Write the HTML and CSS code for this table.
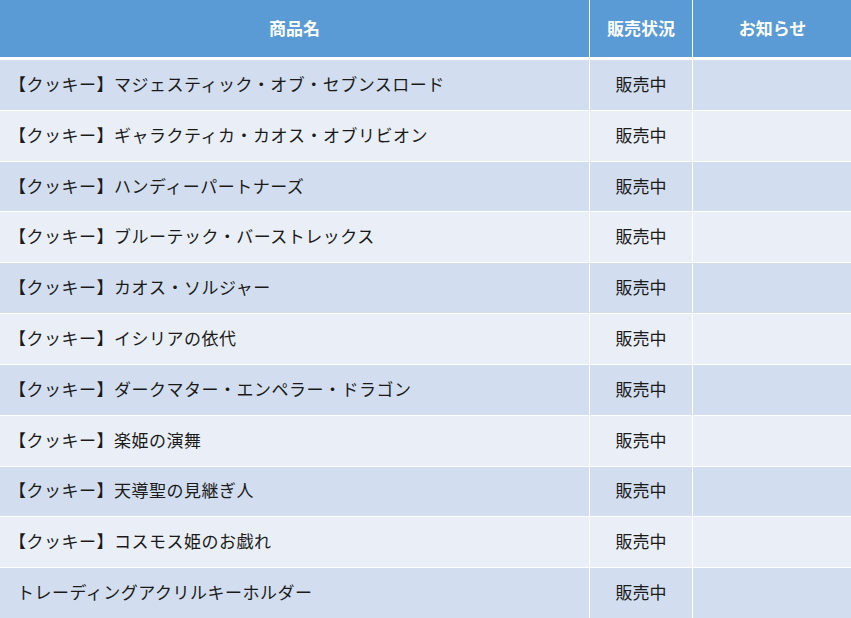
FILE: index.html
```html
<!DOCTYPE html>
<html lang="ja">
<head>
<meta charset="utf-8">
<link rel="stylesheet" href="styles.css">
</head>
<body>
<div class="table">
  <div class="head">
    <div class="th">商品名</div>
    <div class="th">販売状況</div>
    <div class="th">お知らせ</div>
  </div>
  <div class="body">
    <div class="row odd"><div class="td name">【クッキー】マジェスティック・オブ・セブンスロード</div><div class="td status">販売中</div><div class="td"></div></div>
    <div class="row even"><div class="td name">【クッキー】ギャラクティカ・カオス・オブリビオン</div><div class="td status">販売中</div><div class="td"></div></div>
    <div class="row odd"><div class="td name">【クッキー】ハンディーパートナーズ</div><div class="td status">販売中</div><div class="td"></div></div>
    <div class="row even"><div class="td name">【クッキー】ブルーテック・バーストレックス</div><div class="td status">販売中</div><div class="td"></div></div>
    <div class="row odd"><div class="td name">【クッキー】カオス・ソルジャー</div><div class="td status">販売中</div><div class="td"></div></div>
    <div class="row even"><div class="td name">【クッキー】イシリアの依代</div><div class="td status">販売中</div><div class="td"></div></div>
    <div class="row odd"><div class="td name">【クッキー】ダークマター・エンペラー・ドラゴン</div><div class="td status">販売中</div><div class="td"></div></div>
    <div class="row even"><div class="td name">【クッキー】楽姫の演舞</div><div class="td status">販売中</div><div class="td"></div></div>
    <div class="row odd"><div class="td name">【クッキー】天導聖の見継ぎ人</div><div class="td status">販売中</div><div class="td"></div></div>
    <div class="row even"><div class="td name">【クッキー】コスモス姫のお戯れ</div><div class="td status">販売中</div><div class="td"></div></div>
    <div class="row odd"><div class="td name plain">トレーディングアクリルキーホルダー</div><div class="td status">販売中</div><div class="td"></div></div>
  </div>
</div>
</body>
</html>
```
FILE: styles.css
```css
html, body {
  margin: 0;
  padding: 0;
  background: #ffffff;
}
body {
  width: 851px;
  height: 618px;
  overflow: hidden;
  font-family: "Noto Sans CJK JP", "Noto Sans", sans-serif;
}
.table {
  display: flex;
  flex-direction: column;
  width: 851px;
  height: 618px;
}
.head, .row {
  display: grid;
  grid-template-columns: 589px 102px 159px;
  column-gap: 1px;
}
.head {
  height: 57px;
  margin-bottom: 3px;
}
.th {
  background: #5b9bd5;
  color: #ffffff;
  font-weight: bold;
  font-size: 17px;
  display: flex;
  align-items: center;
  justify-content: center;
  padding-bottom: 3px;
}
.body {
  flex: 1;
  display: grid;
  grid-template-rows: repeat(11, 1fr);
  row-gap: 1px;
}
.row.odd .td { background: #d2deef; }
.row.even .td { background: #eaeff7; }
.td {
  display: flex;
  align-items: center;
  font-size: 17px;
  color: #1a1a1a;
  padding-bottom: 3px;
}
.name {
  padding-left: 9px;
  letter-spacing: 0.5px;
}
.name.plain {
  padding-left: 17px;
}
.status {
  justify-content: center;
}
```
